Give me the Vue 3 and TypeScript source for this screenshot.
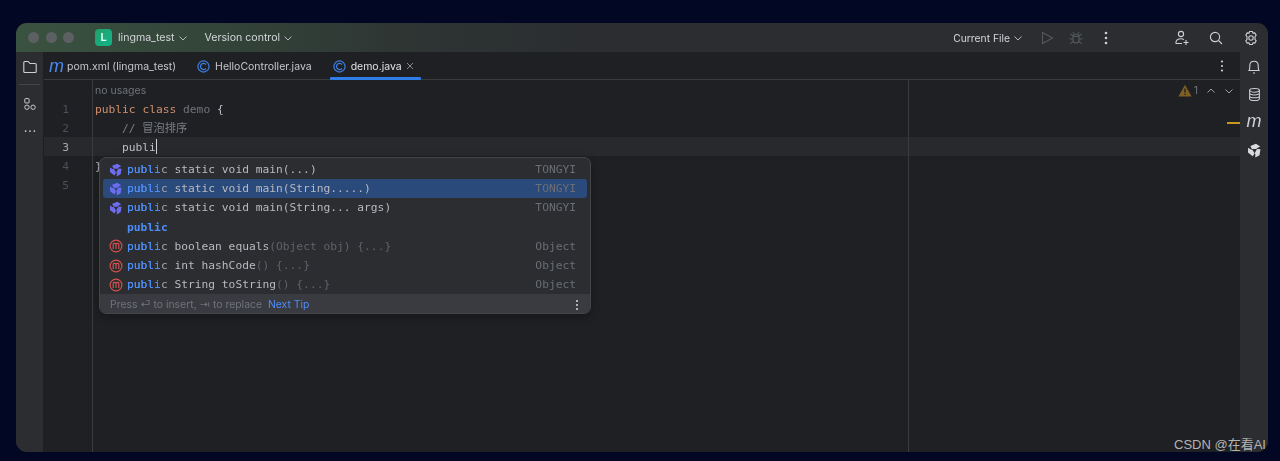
<script setup lang="ts">
interface Row { kind: 'ai' | 'none' | 'method'; rest: string; hint?: string; owner: string; selected?: boolean; bold?: boolean }
const rows: Row[] = [
  { kind: 'ai', rest: ' static void main(...)', owner: 'TONGYI' },
  { kind: 'ai', rest: ' static void main(String.....)', owner: 'TONGYI', selected: true },
  { kind: 'ai', rest: ' static void main(String... args)', owner: 'TONGYI' },
  { kind: 'none', rest: '', owner: '', bold: true },
  { kind: 'method', rest: ' boolean equals', hint: '(Object obj) {...}', owner: 'Object' },
  { kind: 'method', rest: ' int hashCode', hint: '() {...}', owner: 'Object' },
  { kind: 'method', rest: ' String toString', hint: '() {...}', owner: 'Object' },
]
const blade = 'M3.6 3.2 L9.6 .9 L14 3.6 L11 5.2 L9.8 6.5 L5.2 6.5 Z'
const turns = ['rotate(0 8 8)', 'rotate(120 8 8)', 'rotate(240 8 8)']
</script>

<template>
  <div class="page">
    <div class="window">
      <header class="titlebar">
        <div class="lights"><i></i><i></i><i></i></div>
        <span class="logo">L</span>
        <span class="title-text project">lingma_test</span>
        <svg class="chev" viewBox="0 0 10 10"><path d="M1.5 3.5 L5 7 L8.5 3.5" /></svg>
        <span class="title-text vcs">Version control</span>
        <svg class="chev" viewBox="0 0 10 10"><path d="M1.5 3.5 L5 7 L8.5 3.5" /></svg>
        <span class="grow"></span>
        <span class="title-text current">Current File</span>
        <svg class="chev" viewBox="0 0 10 10"><path d="M1.5 3.5 L5 7 L8.5 3.5" /></svg>
        <svg class="ic play" viewBox="0 0 16 16"><path d="M3.5 2.5 L13.5 8 L3.5 13.5 Z" /></svg>
        <svg class="ic bug" viewBox="0 0 16 16"><path d="M5 6.5 C5 3.5 11 3.5 11 6.5 V10 C11 14 5 14 5 10 Z M5 6.5 H11 M5 9 H1.5 M11 9 H14.5 M5 6 L2.5 3.8 M11 6 L13.5 3.8 M5 11.5 L2.5 13.5 M11 11.5 L13.5 13.5 M6 3.5 L5 2 M10 3.5 L11 2" /></svg>
        <svg class="ic vdots" viewBox="0 0 16 16"><circle cx="8" cy="3" r="1.3" /><circle cx="8" cy="8" r="1.3" /><circle cx="8" cy="13" r="1.3" /></svg>
        <svg class="ic adduser" viewBox="0 0 16 16"><circle cx="7" cy="4" r="2.6" /><path d="M1.8 13.5 C1.8 10.5 4 8.8 7 8.8 C8.2 8.8 9.2 9 10 9.6 M1.8 13.5 H8 M12 10 V15 M9.5 12.5 H14.5" /></svg>
        <svg class="ic search" viewBox="0 0 16 16"><circle cx="7" cy="7" r="4.6" /><path d="M10.5 10.5 L14 14" /></svg>
        <svg class="ic gear" viewBox="0 0 16 16"><path d="M6.6 1.5 H9.4 L10 3.2 L11.8 2.9 L13.2 5.2 L12 6.6 V9.4 L13.2 10.8 L11.8 13.1 L10 12.8 L9.4 14.5 H6.6 L6 12.8 L4.2 13.1 L2.8 10.8 L4 9.4 V6.6 L2.8 5.2 L4.2 2.9 L6 3.2 Z" stroke-linejoin="round" /><circle cx="8" cy="8" r="2.2" /></svg>
      </header>

      <div class="main">
        <aside class="side left">
          <svg class="ic s-first" viewBox="0 0 16 16"><path d="M1.8 3.5 C1.8 3 2.2 2.5 2.8 2.5 H6.2 L8 4.5 H13.2 C13.8 4.5 14.2 5 14.2 5.5 V12.5 C14.2 13 13.8 13.5 13.2 13.5 H2.8 C2.2 13.5 1.8 13 1.8 12.5 Z" /></svg>
          <span class="sep"></span>
          <svg class="ic s-struct" viewBox="0 0 16 16"><rect x="2" y="1.8" width="5" height="5" rx="1" /><rect x="2" y="9.2" width="5" height="5" rx="2.5" /><rect x="9" y="9.2" width="5" height="5" rx="2.5" /></svg>
          <svg class="ic s-more" viewBox="0 0 16 16"><circle cx="3" cy="8" r="1" /><circle cx="8" cy="8" r="1" /><circle cx="13" cy="8" r="1" /></svg>
        </aside>

        <div class="center">
          <nav class="tabs">
            <div class="tab pom"><span class="m-icon">m</span><span>pom.xml (lingma_test)</span></div>
            <div class="tab hello">
              <svg class="c-icon" viewBox="0 0 14 14"><circle cx="7" cy="7" r="6" /><path d="M9.7 5 A3.3 3.3 0 1 0 9.7 9" /></svg>
              <span>HelloController.java</span>
            </div>
            <div class="tab active">
              <svg class="c-icon" viewBox="0 0 14 14"><circle cx="7" cy="7" r="6" /><path d="M9.7 5 A3.3 3.3 0 1 0 9.7 9" /></svg>
              <span>demo.java</span>
              <svg class="close" viewBox="0 0 8 8"><path d="M1 1 L7 7 M7 1 L1 7" /></svg>
            </div>
            <span class="grow"></span>
            <svg class="ic tab-more" viewBox="0 0 16 16"><circle cx="8" cy="3.5" r="1.1" /><circle cx="8" cy="8" r="1.1" /><circle cx="8" cy="12.5" r="1.1" /></svg>
          </nav>

          <section class="editor">
            <div class="gutter">
              <div class="num"></div>
              <div class="num">1</div>
              <div class="num">2</div>
              <div class="num now">3</div>
              <div class="num">4</div>
              <div class="num">5</div>
            </div>
            <div class="code">
              <div class="line usages">no usages</div>
              <div class="line"><span class="kw">public class</span> <span class="unused">demo</span> {</div>
              <div class="line indent"><span class="comment">// 冒泡排序</span></div>
              <div class="line indent current-line">publi<span class="caret"></span></div>
              <div class="line">}</div>
              <div class="line"></div>
            </div>
            <div class="margin-line"></div>
            <div class="inspect">
              <svg class="warn" viewBox="0 0 14 13"><path d="M7 .8 L13.6 12.4 H.4 Z" /><path class="mark" d="M7 4.5 V8.6 M7 9.8 V11" /></svg>
              <span class="warn-count">1</span>
              <svg class="nav-chev up" viewBox="0 0 10 10"><path d="M1.5 6.5 L5 3 L8.5 6.5" /></svg>
              <svg class="nav-chev" viewBox="0 0 10 10"><path d="M1.5 3.5 L5 7 L8.5 3.5" /></svg>
            </div>
            <span class="stripe"></span>

            <div class="popup">
              <div class="list">
                <div v-for="(row, i) in rows" :key="i" class="row" :class="{ selected: row.selected }">
                  <svg v-if="row.kind === 'ai'" class="r-icon ai" viewBox="0 0 16 16"><path v-for="t in turns" :key="t" :d="blade" :transform="t" /></svg>
                  <svg v-else-if="row.kind === 'method'" class="r-icon method" viewBox="0 0 14 14"><circle cx="7" cy="7" r="5.9" /><path d="M4.2 10 V5.2 C4.2 4 6.8 4 7 5.6 V10 M7 5.6 C7.2 4 9.8 4 9.8 5.2 V10" /></svg>
                  <span v-else class="r-icon"></span>
                  <span class="r-text"><span class="match" :class="{ strong: row.bold }">publi</span><span class="c" :class="{ strong: row.bold }">c</span><span>{{ row.rest }}</span><span v-if="row.hint" class="hint">{{ row.hint }}</span></span>
                  <span class="owner">{{ row.owner }}</span>
                </div>
              </div>
              <footer class="pop-foot">
                <span>Press ⏎ to insert, ⇥ to replace</span>
                <a class="tip">Next Tip</a>
                <span class="grow"></span>
                <svg class="ic foot-more" viewBox="0 0 16 16"><circle cx="8" cy="3.5" r="1.2" /><circle cx="8" cy="8" r="1.2" /><circle cx="8" cy="12.5" r="1.2" /></svg>
              </footer>
            </div>
          </section>
        </div>

        <aside class="side right">
          <svg class="ic s-first" viewBox="0 0 16 16"><path d="M3 11.5 C4 10 3.8 8.5 3.8 6.5 C3.8 4 5.6 2.2 8 2.2 C10.4 2.2 12.2 4 12.2 6.5 C12.2 8.5 12 10 13 11.5 Z M7 14 H9" /></svg>
          <svg class="ic s-db" viewBox="0 0 16 16"><ellipse cx="8" cy="3.5" rx="5.2" ry="2" /><path d="M2.8 3.5 V12.5 C2.8 13.6 5.1 14.5 8 14.5 C10.9 14.5 13.2 13.6 13.2 12.5 V3.5 M2.8 6.5 C2.8 7.6 5.1 8.5 8 8.5 C10.9 8.5 13.2 7.6 13.2 6.5 M2.8 9.5 C2.8 10.6 5.1 11.5 8 11.5 C10.9 11.5 13.2 10.6 13.2 9.5" /></svg>
          <span class="side-m">m</span>
          <svg class="s-ai" viewBox="0 0 16 16"><path v-for="t in turns" :key="t" :d="blade" :transform="t" /></svg>
        </aside>
      </div>
    </div>
    <span class="watermark">CSDN @在看AI</span>
  </div>
</template>

<style>
html, body { margin: 0; background: #020823; }
</style>

<style scoped>
.page {
  position: relative;
  width: 1280px;
  height: 461px;
  box-sizing: border-box;
  padding: 23px 12px 9px 16px;
  overflow: hidden;
  background: #020823;
  font-family: Inter, "Noto Sans", sans-serif;
}
.window {
  height: 100%;
  display: flex;
  flex-direction: column;
  border-radius: 11px;
  overflow: hidden;
  background: #1f2023;
  filter: blur(.3px);
}
.grow { flex: 1; }
svg { display: block; flex: none; }
.ic { width: 16px; height: 16px; fill: none; stroke: #ced0d6; stroke-width: 1.1; }

.titlebar {
  height: 29px;
  flex: none;
  display: flex;
  align-items: center;
  background: linear-gradient(90deg, #3a5240 0%, #34463a 14%, #2e3634 30%, #2b2d30 45%);
}
.lights { display: flex; gap: 6.5px; margin-left: 12px; }
.lights i { width: 11px; height: 11px; border-radius: 50%; background: #5d6063; }
.logo {
  width: 17px;
  height: 17px;
  margin-left: 21px;
  border-radius: 4px;
  background: linear-gradient(135deg, #21a06a, #12b58a);
  color: #eafff6;
  font-size: 11px;
  font-weight: 600;
  line-height: 17px;
  text-align: center;
}
.title-text { color: #d3d5da; font-size: 10.6px; line-height: 16px; white-space: nowrap; }
.project { margin-left: 6px; }
.chev { width: 10px; height: 10px; margin-left: 3px; fill: none; stroke: #b4b6bc; stroke-width: 1; }
.vcs { margin-left: 17px; }
.current { font-size: 10.3px; }
.play { margin-left: 16px; stroke: #55585c; }
.bug { margin-left: 13px; stroke: #55585c; }
.vdots { margin-left: 14px; stroke: none; fill: #ced0d6; }
.adduser { margin-left: 60px; }
.search { margin-left: 18px; }
.gear { margin-left: 19px; margin-right: 9px; }

.main { flex: 1; min-height: 0; display: flex; }
.side {
  flex: none;
  width: 28px;
  display: flex;
  flex-direction: column;
  align-items: center;
  background: #2b2d30;
}
.left { border-right: 1px solid #1e1f22; box-sizing: border-box; }
.s-first { margin-top: 7px; }
.sep { width: 21px; height: 1px; margin-top: 9px; background: #43454a; }
.s-struct { margin-top: 12px; width: 14px; height: 14px; }
.s-more { margin-top: 13px; width: 14px; height: 14px; stroke: none; fill: #ced0d6; }
.s-db { margin-top: 12px; width: 15px; height: 15px; }
.side-m {
  margin-top: 10px;
  height: 18px;
  color: #ced0d6;
  font: italic 500 18px/18px "Liberation Sans", sans-serif;
}
.s-ai { width: 15px; height: 15px; margin-top: 13px; fill: #d8dade; }

.center { flex: 1; min-width: 0; display: flex; flex-direction: column; }
.tabs {
  height: 28px;
  flex: none;
  box-sizing: border-box;
  display: flex;
  align-items: center;
  padding-top: 1px;
  border-bottom: 1px solid #393b40;
  background: #1f2023;
  font-size: 10.5px;
  color: #c4c6cc;
}
.tab { display: flex; align-items: center; white-space: nowrap; }
.pom { margin-left: 5px; }
.m-icon { width: 16px; margin-right: 2px; color: #4a8af0; font: italic 500 18px/16px "Liberation Sans", sans-serif; }
.hello { margin-left: 21px; gap: 5px; }
.c-icon { width: 13px; height: 13px; fill: none; stroke: #3f7fe0; stroke-width: 1.3; }
.active {
  position: relative;
  margin-left: 21px;
  gap: 5px;
  color: #dfe1e5;
}
.active::after {
  content: "";
  position: absolute;
  left: -3px;
  right: -7px;
  bottom: -7px;
  height: 2.5px;
  border-radius: 1px;
  background: #2e7de8;
}
.close { width: 8px; height: 8px; fill: none; stroke: #868a91; stroke-width: 1; margin-left: -1px; }
.tab-more { margin-right: 10px; stroke: none; fill: #ced0d6; }

.editor {
  position: relative;
  flex: 1;
  min-height: 0;
  display: flex;
  font-family: "DejaVu Sans Mono", "Noto Sans CJK SC", monospace;
  font-size: 11.26px;
  color: #bcbec4;
  background: #1f2023;
}
.gutter { width: 49px; flex: none; border-right: 1px solid #393b40; box-sizing: border-box; }
.num { height: 19px; line-height: 21px; text-align: right; padding-right: 23px; color: #4b5059; }
.num.now { color: #a6a9af; background: #27292d; }
.code { flex: 1; }
.line { height: 19px; line-height: 21px; padding-left: 2px; white-space: pre; }
.indent { padding-left: 29px; }
.current-line { background: #27292d; }
.usages { color: #6f737a; font-family: Inter, sans-serif; font-size: 10.5px; }
.kw { color: #cf8e6d; }
.unused { color: #6f737a; }
.comment { color: #7a7e85; }
.caret { display: inline-block; width: 1.5px; height: 15px; background: #ced0d6; vertical-align: -3px; }

.margin-line { position: absolute; left: 864px; top: 0; bottom: 0; width: 1px; background: #393b40; }
.inspect {
  position: absolute;
  top: 4px;
  right: 6px;
  display: flex;
  align-items: center;
  color: #6f737a;
  font: 10.5px Inter, sans-serif;
}
.warn { width: 14px; height: 13px; fill: #7d5f24; }
.warn .mark { stroke: #1f2023; stroke-width: 1.4; fill: none; }
.warn-count { margin-left: 2px; }
.nav-chev { width: 10px; height: 10px; fill: none; stroke: #9a9da3; stroke-width: 1; margin-left: 8px; }
.stripe { position: absolute; right: 0; top: 41.5px; width: 13px; height: 2px; background: #c9971f; }

.popup {
  position: absolute;
  left: 55px;
  top: 77px;
  width: 492px;
  height: 157px;
  box-sizing: border-box;
  display: flex;
  flex-direction: column;
  border: 1px solid #43454a;
  border-radius: 7px;
  overflow: hidden;
  background: #2b2d30;
  box-shadow: 0 3px 10px rgba(0, 0, 0, .3);
}
.list { flex: 1; padding: 2px 3px 0; }
.row { height: 19.2px; display: flex; align-items: center; padding: 0 11px 0 6px; border-radius: 3px; }
.row.selected { background: #2b4a7c; }
.r-icon { width: 14px; height: 14px; margin-right: 4px; flex: none; }
.ai { fill: #6d6cf0; }
.method { fill: none; stroke: #d9534f; stroke-width: 1.1; }
.r-text { flex: 1; white-space: pre; color: #b8bac0; }
.match { color: #4f8df5; text-shadow: 0 0 .5px #4f8df5; }
.c { color: #a0a3a9; }
.match.strong, .c.strong { color: #4f8df5; font-weight: 700; text-shadow: none; }
.hint { color: #5f6269; }
.owner { color: #6a6e75; }
.pop-foot {
  flex: none;
  height: 21px;
  display: flex;
  align-items: center;
  padding: 0 6px 0 10px;
  background: #393b40;
  color: #6f737a;
  font: 10.4px Inter, "DejaVu Sans", sans-serif;
}
.tip { margin-left: 6px; color: #4f8df5; }
.foot-more { width: 14px; height: 14px; stroke: none; fill: #ced0d6; }

.watermark {
  position: absolute;
  left: 1174px;
  top: 436px;
  color: #b4b4b4;
  font: 13px/17px "Liberation Sans", "Noto Sans CJK SC", sans-serif;
  white-space: nowrap;
}
</style>
